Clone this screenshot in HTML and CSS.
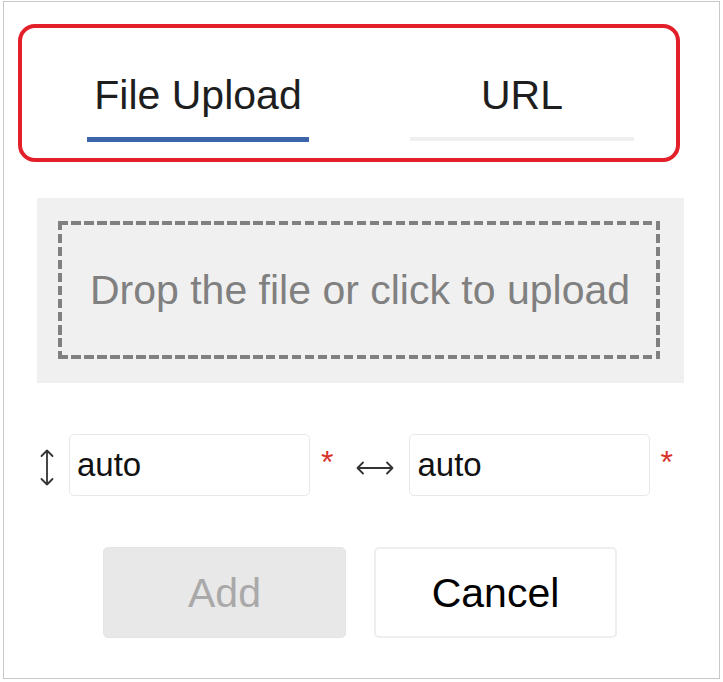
FILE: index.html
```html
<!DOCTYPE html>
<html lang="en">
<head>
<meta charset="utf-8">
<title>Upload</title>
<link rel="stylesheet" href="styles.css">
</head>
<body>
<div class="dialog">
  <div class="tabs-frame">
    <div class="tabs">
      <div class="tab tab-active">
        <span class="tab-label">File Upload</span>
        <span class="tab-bar"></span>
      </div>
      <div class="tab tab-idle">
        <span class="tab-label">URL</span>
        <span class="tab-bar"></span>
      </div>
    </div>
  </div>

  <div class="drop-area">
    <div class="drop-zone">Drop the file or click to upload</div>
  </div>

  <div class="size-row">
    <svg class="icon-vert" width="14" height="37" viewBox="0 0 14 37" aria-hidden="true">
      <path d="M7 1.5 V35.5 M1.5 7 L7 1.5 L12.5 7 M1.5 30 L7 35.5 L12.5 30" fill="none" stroke="#333" stroke-width="1.8" stroke-linecap="round" stroke-linejoin="round"/>
    </svg>
    <div class="field field-first">auto</div>
    <span class="req req-first">*</span>
    <svg class="icon-horiz" width="38" height="14" viewBox="0 0 38 14" aria-hidden="true">
      <path d="M1.5 7 H36.5 M7 1.5 L1.5 7 L7 12.5 M31 1.5 L36.5 7 L31 12.5" fill="none" stroke="#333" stroke-width="1.8" stroke-linecap="round" stroke-linejoin="round"/>
    </svg>
    <div class="field field-second">auto</div>
    <span class="req req-second">*</span>
  </div>

  <div class="actions">
    <div class="btn btn-add">Add</div>
    <div class="btn btn-cancel">Cancel</div>
  </div>
</div>
</body>
</html>
```

FILE: styles.css
```css
* {
  box-sizing: border-box;
}

html, body {
  margin: 0;
  padding: 0;
  background: #ffffff;
}

body {
  padding: 1px 0 0 3px;
  font-family: "Liberation Sans", Arial, sans-serif;
}

.dialog {
  width: 717px;
  height: 678px;
  border: 1px solid #c8c8c8;
  background: #ffffff;
  display: flex;
  flex-direction: column;
}

/* Tabs */
.tabs-frame {
  margin: 22px 0 0 14px;
  width: 662px;
  height: 138px;
  border: 4px solid #e3202a;
  border-radius: 17px;
}

.tabs {
  display: flex;
  padding: 44px 0 0 65px;
}

.tab {
  display: flex;
  flex-direction: column;
  align-items: center;
}

.tab-active {
  width: 222px;
}

.tab-idle {
  width: 224px;
  margin-left: 101px;
}

.tab-label {
  font-size: 41px;
  line-height: 46px;
  color: #1e1e1e;
}

.tab-bar {
  display: block;
  width: 100%;
  margin-top: 19px;
}

.tab-active .tab-bar {
  height: 5px;
  background: #3d63a8;
}

.tab-idle .tab-bar {
  height: 4px;
  background: #efefef;
}

/* Drop area */
.drop-area {
  margin: 36px 0 0 33px;
  width: 647px;
  height: 185px;
  background: #f0f0f0;
  padding: 23px 23px 0 21px;
}

.drop-zone {
  width: 602px;
  height: 138px;
  background:
    repeating-linear-gradient(to right, #808080 0 9.5px, transparent 9.5px 13px) top left / 100% 4px no-repeat,
    repeating-linear-gradient(to right, #808080 0 9.5px, transparent 9.5px 13px) bottom left / 100% 4px no-repeat,
    repeating-linear-gradient(to bottom, #808080 0 9.5px, transparent 9.5px 13px) top left / 4px 100% no-repeat,
    repeating-linear-gradient(to bottom, #808080 0 9.5px, transparent 9.5px 13px) top right / 4px 100% no-repeat;
  display: flex;
  align-items: center;
  justify-content: center;
  font-size: 41px;
  line-height: 46px;
  color: #808080;
  padding-left: 2px;
}

/* Size inputs */
.size-row {
  display: flex;
  align-items: center;
  margin: 51px 0 0 36px;
  height: 62px;
}

.icon-vert {
  display: block;
  margin-top: 4px;
}

.icon-horiz {
  display: block;
  margin-left: 23px;
  margin-top: 6px;
}

.field {
  width: 241px;
  height: 62px;
  border: 1px solid #e8e8e8;
  border-radius: 5px;
  padding-left: 7px;
  font-size: 33px;
  line-height: 60px;
  color: #111111;
}

.field-first {
  margin-left: 15px;
}

.field-second {
  margin-left: 15px;
}

.req {
  align-self: flex-start;
  color: #d8322a;
  font-size: 32px;
  line-height: 32px;
  margin-top: 12px;
}

.req-first {
  margin-left: 11px;
}

.req-second {
  margin-left: 10px;
}

/* Buttons */
.actions {
  display: flex;
  margin: 51px 0 0 99px;
}

.btn {
  width: 243px;
  height: 91px;
  border-radius: 5px;
  display: flex;
  align-items: center;
  justify-content: center;
  font-size: 41px;
  line-height: 46px;
}

.btn-add {
  background: #e9e8e9;
  border: 1px solid #e4e4e4;
  color: #a9a9a9;
}

.btn-cancel {
  width: 243px;
  margin-left: 28px;
  background: #ffffff;
  border: 2px solid #eeeeee;
  color: #000000;
}
```
